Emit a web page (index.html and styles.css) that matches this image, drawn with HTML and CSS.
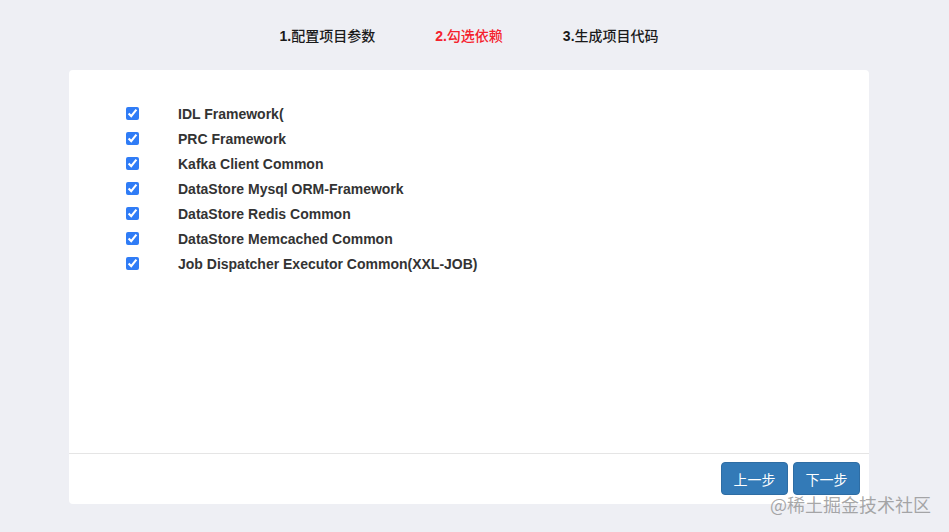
FILE: index.html
```html
<!DOCTYPE html>
<html lang="zh">
<head>
<meta charset="utf-8">
<link rel="stylesheet" href="styles.css">
</head>
<body>
<div class="page">
  <div class="steps">
    <span class="step"><b>1.</b>配置项目参数</span>
    <span class="step active"><b>2.</b>勾选依赖</span>
    <span class="step"><b>3.</b>生成项目代码</span>
  </div>
  <div class="card">
    <div class="card-body">
      <label class="item"><input type="checkbox" checked><span>IDL Framework(</span></label>
      <label class="item"><input type="checkbox" checked><span>PRC Framework</span></label>
      <label class="item"><input type="checkbox" checked><span>Kafka Client Common</span></label>
      <label class="item"><input type="checkbox" checked><span>DataStore Mysql ORM-Framework</span></label>
      <label class="item"><input type="checkbox" checked><span>DataStore Redis Common</span></label>
      <label class="item"><input type="checkbox" checked><span>DataStore Memcached Common</span></label>
      <label class="item"><input type="checkbox" checked><span>Job Dispatcher Executor Common(XXL-JOB)</span></label>
    </div>
    <div class="card-footer">
      <button class="btn">上一步</button>
      <button class="btn">下一步</button>
    </div>
  </div>
</div>
<div class="watermark">@稀土掘金技术社区</div>
</body>
</html>
```
FILE: styles.css
```css
html, body {
  margin: 0;
  padding: 0;
  background: #eeeff4;
  font-family: "Liberation Sans", "Noto Sans CJK SC", sans-serif;
  color: #222;
}
.page {
  width: 800px;
  margin-left: 69px;
}
.steps {
  height: 70px;
  display: flex;
  justify-content: center;
  align-items: center;
  gap: 60px;
  font-size: 14px;
  font-weight: 500;
  color: #1a1a1a;
}
.step b { font-weight: bold; }
.step.active { color: #f5222d; }
.card {
  background: #fff;
  border-radius: 4px;
  height: 434px;
  display: flex;
  flex-direction: column;
}
.card-body {
  flex: 1;
  padding: 31px 0 0 57px;
  display: flex;
  flex-direction: column;
}
.item {
  display: flex;
  align-items: center;
  height: 25px;
  font-size: 14px;
  font-weight: bold;
  color: #333;
}
.item input {
  margin: 0 39px 0 0;
  width: 13px;
  height: 13px;
  accent-color: #2f7cf6;
}
.card-footer {
  border-top: 1px solid #e5e5e5;
  display: flex;
  justify-content: flex-end;
  gap: 5px;
  padding: 8px 9px 9px;
}
.btn {
  width: 67px;
  height: 33px;
  background: #337ab7;
  border: 1px solid #2e6da4;
  border-radius: 4px;
  color: #fff;
  font-size: 14px;
  font-family: "Liberation Sans", "Noto Sans CJK SC", sans-serif;
  padding: 0;
}
.watermark {
  position: absolute;
  left: 770px;
  top: 491px;
  font-size: 18px;
  color: rgba(140,140,140,0.75);
  font-family: "Noto Sans CJK SC", sans-serif;
}
```
